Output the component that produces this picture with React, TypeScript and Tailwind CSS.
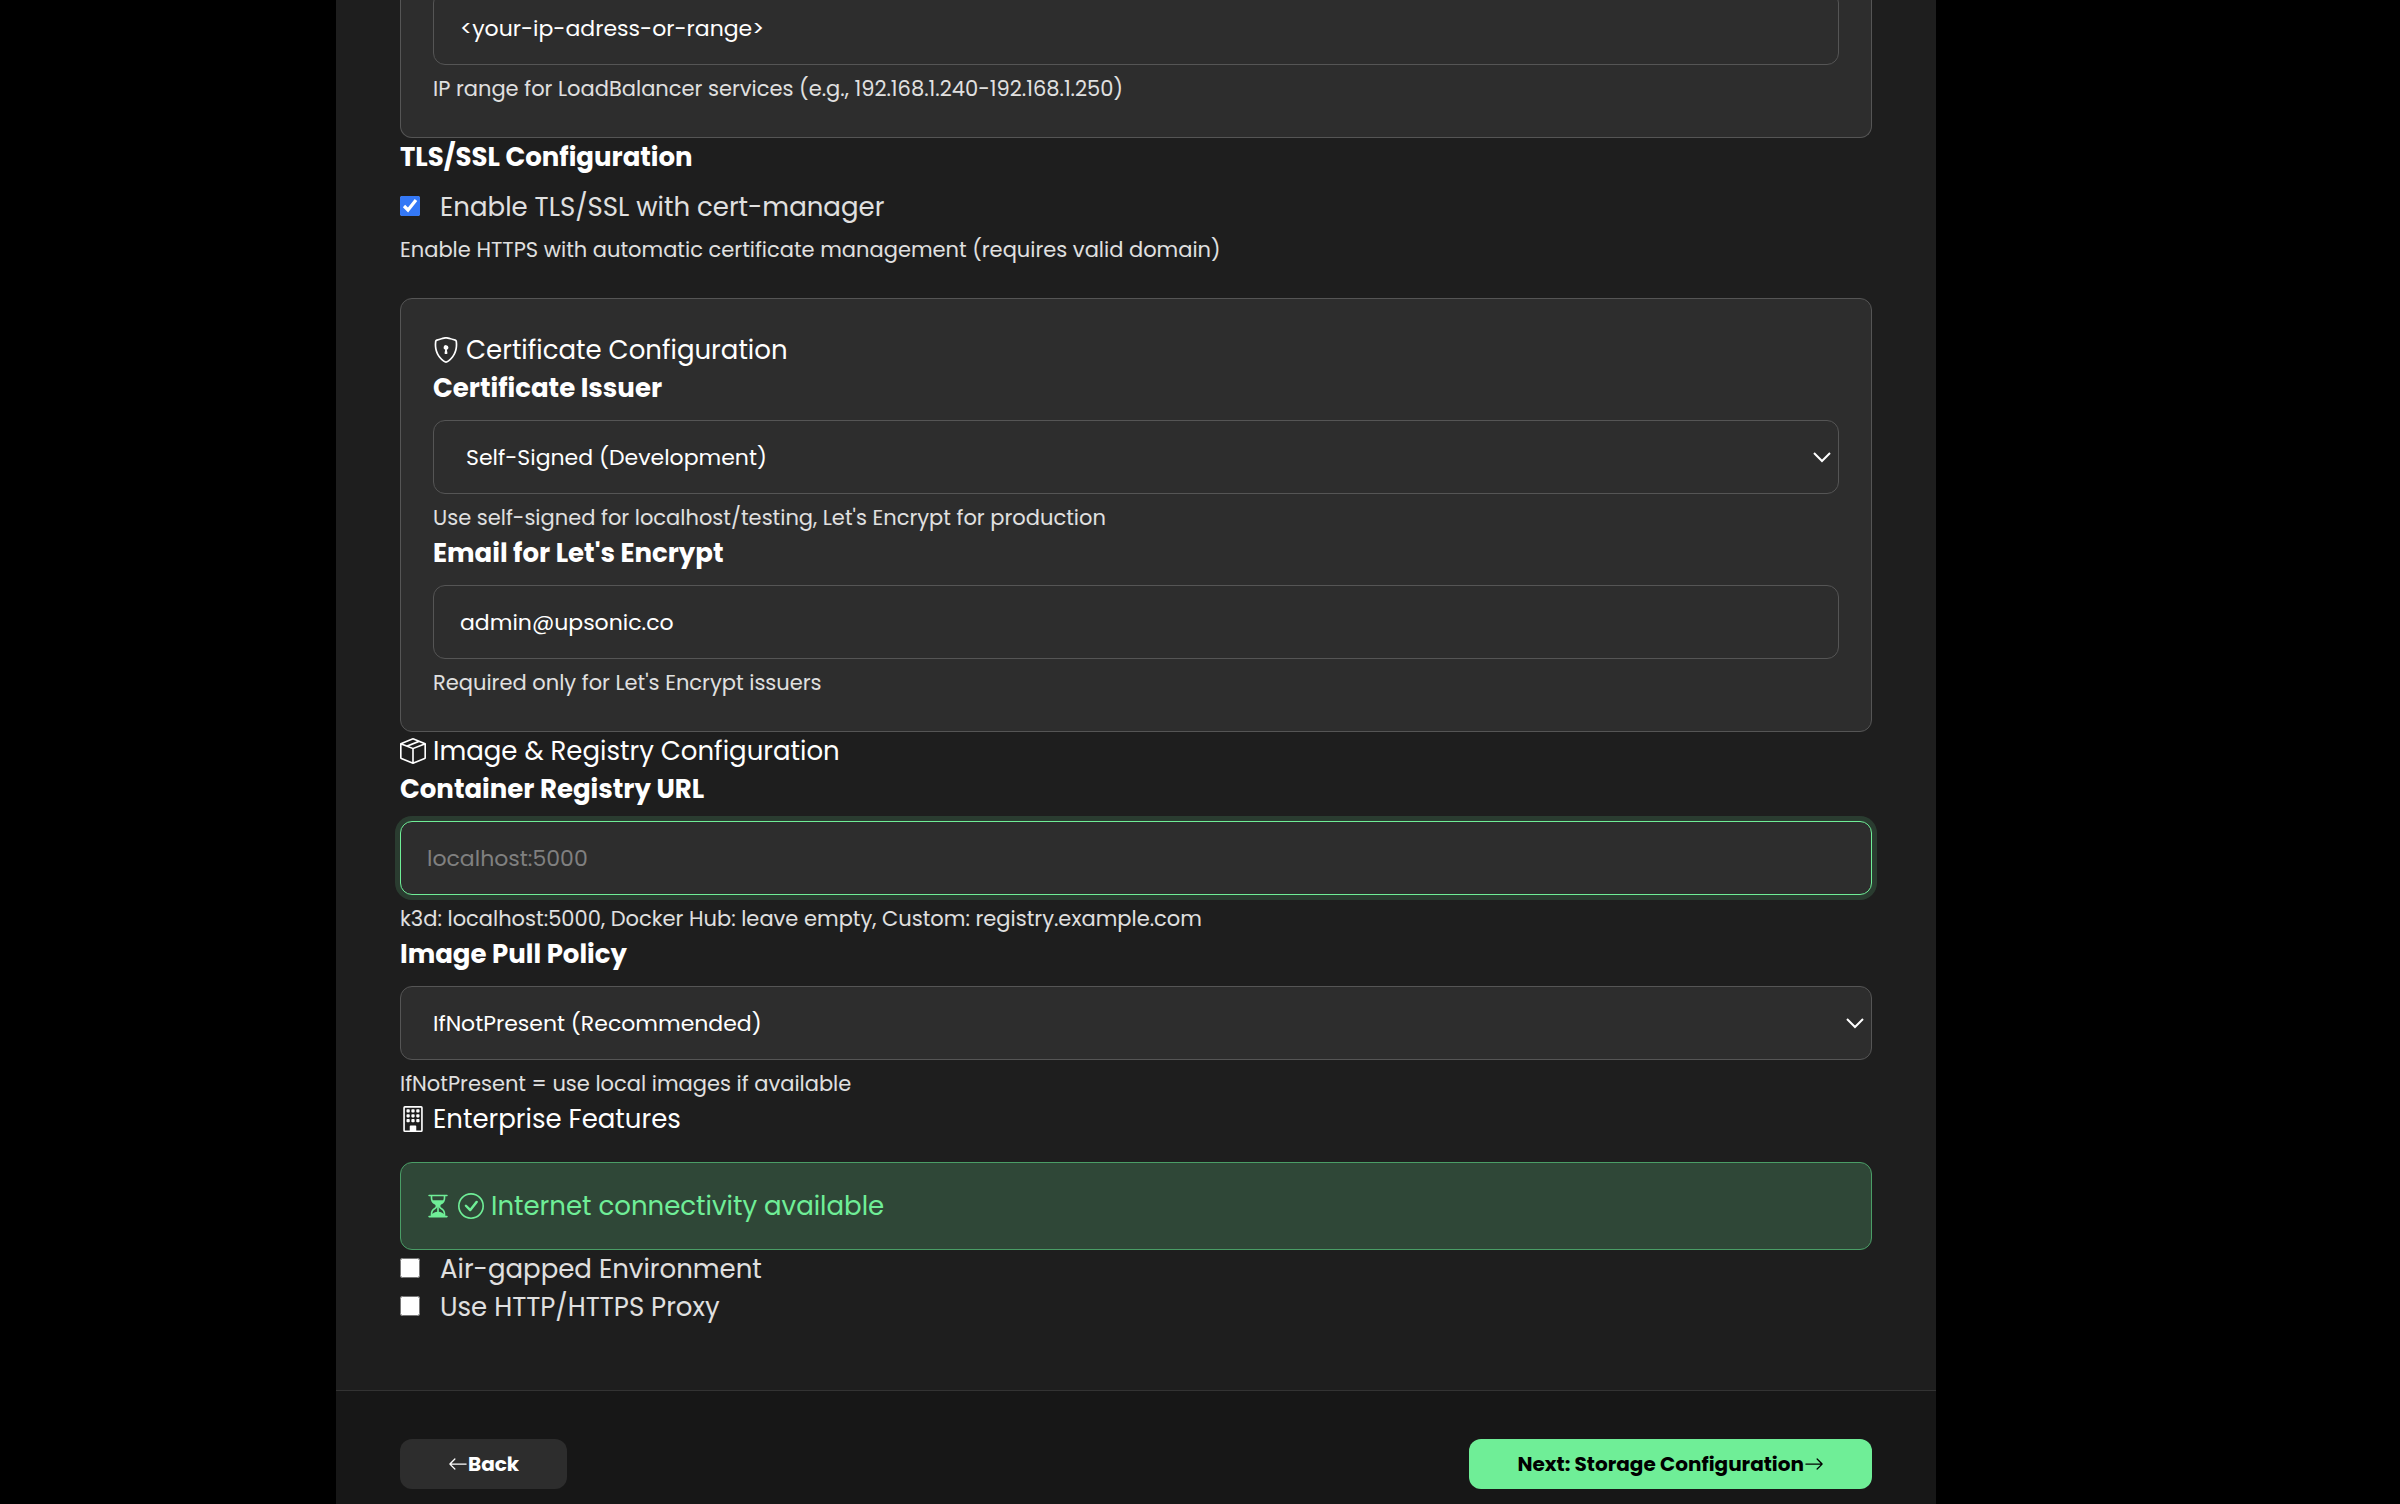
import { useState } from 'react'
import type { ReactNode } from 'react'
import {
  BsArrowLeft,
  BsArrowRight,
  BsBoxSeam,
  BsBuilding,
  BsCheckCircle,
  BsHourglassSplit,
  BsShieldLock,
} from 'react-icons/bs'

const fieldClass =
  'block w-full h-[74px] rounded-xl border bg-[#2d2d2d] text-[22px] text-white outline-none placeholder:text-[#808080]'

function Label({ htmlFor, children }: { htmlFor: string; children: ReactNode }) {
  return (
    <label htmlFor={htmlFor} className="block mb-[13px] text-[26px] leading-[38px] font-bold text-white">
      {children}
    </label>
  )
}

function Help({ children }: { children: ReactNode }) {
  return <p className="mt-2 text-[21px] leading-[32px] text-[#e0e0e0]">{children}</p>
}

function Heading({ icon, children }: { icon: ReactNode; children: ReactNode }) {
  return (
    <h3 className="flex items-center gap-[7px] text-[26px] leading-[38px] text-white">
      {icon}
      {children}
    </h3>
  )
}

function Select({
  id,
  value,
  onChange,
  options,
}: {
  id: string
  value: string
  onChange: (value: string) => void
  options: string[]
}) {
  return (
    <div className="relative">
      <select
        id={id}
        value={value}
        onChange={(e) => onChange(e.target.value)}
        className={`${fieldClass} appearance-none border-[#555555] px-8`}
      >
        {options.map((option) => (
          <option key={option}>{option}</option>
        ))}
      </select>
      <svg
        viewBox="0 0 18 12"
        className="pointer-events-none absolute right-2 top-1/2 h-3 w-[18px] -translate-y-1/2"
        fill="none"
        stroke="#ffffff"
        strokeWidth="2"
      >
        <path d="M1 2l8 8 8-8" />
      </svg>
    </div>
  )
}

function Checkbox({
  checked,
  onChange,
  children,
}: {
  checked: boolean
  onChange: (checked: boolean) => void
  children: ReactNode
}) {
  return (
    <label className="flex items-start gap-5 text-[26px] leading-[38px] text-[#e0e0e0]">
      <input
        type="checkbox"
        checked={checked}
        onChange={(e) => onChange(e.target.checked)}
        className="mt-2 h-5 w-5 accent-[#3478f6]"
      />
      {children}
    </label>
  )
}

export default function App() {
  const [ipRange, setIpRange] = useState('<your-ip-adress-or-range>')
  const [tls, setTls] = useState(true)
  const [issuer, setIssuer] = useState('Self-Signed (Development)')
  const [email, setEmail] = useState('admin@upsonic.co')
  const [registry, setRegistry] = useState('')
  const [pullPolicy, setPullPolicy] = useState('IfNotPresent (Recommended)')
  const [airGapped, setAirGapped] = useState(false)
  const [proxy, setProxy] = useState(false)

  return (
    <div className="h-screen overflow-hidden bg-black pr-32 font-['Poppins','Inter',sans-serif]">
      <div className="mx-auto max-w-[1600px] bg-[#1e1e1e]">
        <main className="px-16 pb-16">
          <section className="rounded-b-xl border border-t-0 border-[#555555] bg-[#2d2d2d] px-8 pb-8">
            {/* the list is scrolled, so this field is cut by the top edge */}
            <div className="-mt-[9px] inline-block w-full align-top">
              <input
                aria-label="IP range"
                value={ipRange}
                onChange={(e) => setIpRange(e.target.value)}
                className={`${fieldClass} border-[#555555] px-[26px]`}
              />
              <Help>IP range for LoadBalancer services (e.g., 192.168.1.240-192.168.1.250)</Help>
            </div>
          </section>

          <section className="mb-8">
            <h3 className="mb-3 text-[26px] leading-[38px] font-bold text-white">TLS/SSL Configuration</h3>
            <Checkbox checked={tls} onChange={setTls}>
              Enable TLS/SSL with cert-manager
            </Checkbox>
            <Help>Enable HTTPS with automatic certificate management (requires valid domain)</Help>
          </section>

          <section className="rounded-xl border border-[#555555] bg-[#2d2d2d] p-8">
            <Heading icon={<BsShieldLock />}>Certificate Configuration</Heading>
            <Label htmlFor="issuer">Certificate Issuer</Label>
            <Select
              id="issuer"
              value={issuer}
              onChange={setIssuer}
              options={['Self-Signed (Development)']}
            />
            <Help>Use self-signed for localhost/testing, Let's Encrypt for production</Help>
            <Label htmlFor="email">Email for Let's Encrypt</Label>
            <input
              id="email"
              type="email"
              value={email}
              onChange={(e) => setEmail(e.target.value)}
              className={`${fieldClass} border-[#555555] px-[26px]`}
            />
            <Help>Required only for Let's Encrypt issuers</Help>
          </section>

          <section>
            <Heading icon={<BsBoxSeam />}>Image & Registry Configuration</Heading>
            <Label htmlFor="registry">Container Registry URL</Label>
            <input
              id="registry"
              value={registry}
              onChange={(e) => setRegistry(e.target.value)}
              placeholder="localhost:5000"
              className={`${fieldClass} border-[#6fee97] px-[26px] ring-5 ring-[#6fee97]/15`}
            />
            <Help>k3d: localhost:5000, Docker Hub: leave empty, Custom: registry.example.com</Help>
            <Label htmlFor="pull-policy">Image Pull Policy</Label>
            <Select
              id="pull-policy"
              value={pullPolicy}
              onChange={setPullPolicy}
              options={['IfNotPresent (Recommended)']}
            />
            <Help>IfNotPresent = use local images if available</Help>
          </section>

          <section>
            <Heading icon={<BsBuilding />}>Enterprise Features</Heading>
            <div className="mt-6 flex h-[88px] items-center gap-[7px] rounded-xl border border-[#4a9d66] bg-[#2f4737] px-6 text-[26px] text-[#6fee97]">
              <BsHourglassSplit />
              <BsCheckCircle />
              Internet connectivity available
            </div>
            <Checkbox checked={airGapped} onChange={setAirGapped}>
              Air-gapped Environment
            </Checkbox>
            <Checkbox checked={proxy} onChange={setProxy}>
              Use HTTP/HTTPS Proxy
            </Checkbox>
          </section>
        </main>

        <footer className="flex items-center justify-between border-t border-[#333333] bg-[#171717] px-16 py-12">
          <button
            type="button"
            className="flex h-[50px] items-center rounded-xl bg-[#2d2d2d] px-12 text-[20px] font-bold text-white"
          >
            <BsArrowLeft />
            Back
          </button>
          <button
            type="button"
            className="flex h-[50px] items-center rounded-xl bg-[#6fee97] px-12 text-[20px] font-bold text-black"
          >
            Next: Storage Configuration
            <BsArrowRight />
          </button>
        </footer>
      </div>
    </div>
  )
}
